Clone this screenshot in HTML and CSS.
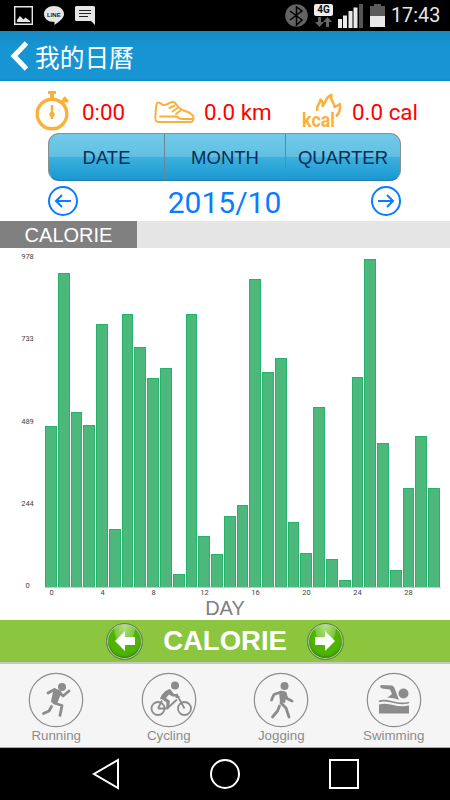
FILE: index.html
```html
<!DOCTYPE html>
<html lang="zh-Hant">
<head>
    <meta charset="UTF-8">
    <meta name="viewport" content="width=device-width, initial-scale=1.0">
    <title>我的日曆</title>
    <link rel="stylesheet" href="styles.css">
</head>
<body>
    <!-- Status bar -->
    <div class="status-bar">
        <div class="status-left">
            <svg width="19" height="19" viewBox="0 0 19 19"><path d="M.7.7h17.6v17.6H.7z" fill="none" stroke="#e6e6e6" stroke-width="1.4"/><path d="M3 16v-2l3-4 3.500 3.500 2-2L16 15v1z" fill="#e6e6e6"/></svg>
            <svg width="20" height="19" viewBox="0 0 20 19"><path d="M10 0c5.500 0 10 3.500 10 8 0 4-4 7-9.500 11v-3C4 16 0 12.500 0 8 0 3.500 4.500 0 10 0z" fill="#e6e6e6"/><text x="3" y="10.500" class="line-text">LINE</text></svg>
            <svg width="20" height="19" viewBox="0 0 20 19"><path d="M0 1.500Q0 0 1.500 0h17Q20 0 20 1.500V19l-4-4H1.500Q0 15 0 13.500z" fill="#e6e6e6"/><path d="M4 4.500h12M4 7.500h12M4 10.500h9" stroke="#222" stroke-width="1"/></svg>
        </div>
        <div class="status-right">
            <svg width="23" height="23" viewBox="0 0 23 23"><circle cx="11.500" cy="11.500" r="11.300" fill="#636363"/><path d="M5 7l12 9-5.500 5V3l5.500 4-12 9" fill="none" stroke="#000" stroke-width="1.500"/></svg>
            <div class="network">
                <span class="network-type">4G</span>
                <svg width="17" height="10" viewBox="0 0 17 10"><path d="M3 0h3v5h3L4.500 10 0 5h3zM11 10h3V5h3l-4.500-5L8 5h3z" fill="#666"/></svg>
            </div>
            <svg class="signal" width="25" height="24" viewBox="0 0 25 24"><path d="M0 15h4v9H0zM5 11.500h4V24H5zM10.500 7h4v17h-4zM15.500 3.500h4V24h-4z" fill="#e9e9e9"/><path d="M21 0h4v24h-4z" fill="#555"/></svg>
            <svg class="battery" width="15" height="23" viewBox="0 0 15 23"><path d="M4 0h7v2h4v11H0V2h4z" fill="#5b5b5b"/><path d="M0 12h15v11H0z" fill="#e9e9e9"/></svg>
            <span class="clock">17:43</span>
        </div>
    </div>

    <header class="header">
        <svg width="18" height="30" viewBox="0 0 18 30"><path d="M16.500 2L4 15l12.500 13" fill="none" stroke="#fff" stroke-width="5"/></svg>
        <h1>我的日曆</h1>
    </header>

    <!-- Totals -->
    <div class="totals">
        <div class="total time">
            <svg width="34" height="42" viewBox="0 1 34 42" fill="none" stroke="#fbb03b"><circle cx="17" cy="24" r="14.800" stroke-width="3.400"/><path d="M17 3v6M27.500 12l4-4" stroke-width="4"/><path d="M13 2.500h8M28.500 7.500l4.500 4.500" stroke-width="3"/><path d="M17 15v14" stroke-width="2.500"/><circle cx="17" cy="24.500" r="2.300" fill="#fbb03b" stroke-width="1"/></svg>
            <span>0:00</span>
        </div>
        <div class="total distance">
            <svg width="41" height="24" viewBox="0 0 41 24" fill="none" stroke="#fbb03b" stroke-width="2" stroke-linecap="round" stroke-linejoin="round"><path d="M3 3c3-2 4 2 7 2C15 5 16 1 19.500 2c3 1 3.500 4.500 6.500 6.500 4 3.300 12 3 13.500 8.500.5 3.500-1 5-4 5H5c-4 0-4-3-3.500-7C2 11 1.500 6 3 3z"/><path d="M6 16.500h16c3 0 2.500 2.500 6 2.500h11M15.500 8l5-2.500M18.500 11.500l5-3.500M22 14l4.500-3.500"/></svg>
            <span>0.0 km</span>
        </div>
        <div class="total calories">
            <svg width="41" height="42" viewBox="0 -2 41 42"><path d="M15.500 18C13.500 13 18.500 10.500 18.500 6.500c2.500 1.500 2.500 4.500 2 6.500 4-3 2-9 9-11-2 6 3.500 7.500 3 12 2-.5 3.500-2 5.500-3 .5 5-.5 9.500-4 12.500" fill="none" stroke="#fbb03b" stroke-width="2.500" stroke-linejoin="round"/><text x="0" y="33.500" class="kcal-text" textLength="33" lengthAdjust="spacingAndGlyphs">kcal</text></svg>
            <span>0.0 cal</span>
        </div>
    </div>

    <div class="tabs">
        <button class="tab">DATE</button>
        <button class="tab">MONTH</button>
        <button class="tab">QUARTER</button>
    </div>

    <div class="date-nav">
        <svg width="30" height="30" viewBox="0 0 30 30" fill="none" stroke="#0a7cff" stroke-width="2"><circle cx="15" cy="15" r="14"/><path d="M23 15H9M14 9l-6 6 6 6"/></svg>
        <span>2015/10</span>
        <svg width="30" height="30" viewBox="0 0 30 30" fill="none" stroke="#0a7cff" stroke-width="2"><circle cx="15" cy="15" r="14"/><path d="M7 15h14M16 9l6 6-6 6"/></svg>
    </div>

    <div class="chart-title"><span>CALORIE</span></div>

    <!-- Chart -->
    <div class="chart">
        <div class="y-axis">
            <span>978</span>
            <span>733</span>
            <span>489</span>
            <span>244</span>
            <span>0</span>
        </div>
        <div class="bars" id="bars"></div>
    </div>
    <div class="x-axis">
        <span>0</span><span>4</span><span>8</span><span>12</span><span>16</span><span>20</span><span>24</span><span>28</span>
    </div>
    <div class="x-title">DAY</div>

    <div class="metric-bar">
        <div class="round-button"><svg width="22" height="20" viewBox="0 0 22 20"><path d="M11 0v6h10v8H11v6L1 10z" fill="#fff"/></svg></div>
        <span>CALORIE</span>
        <div class="round-button"><svg width="22" height="20" viewBox="0 0 22 20"><path d="M11 0v6H1v8h10v6l10-10z" fill="#fff"/></svg></div>
    </div>

    <!-- Sports -->
    <nav class="sports">
        <div class="sport">
            <svg width="56" height="56" viewBox="0 0 56 56"><circle class="ring" cx="28" cy="28" r="26.700"/><circle cx="34" cy="15" r="4" fill="#8c8c8c"/><path d="M26.500 17.500l6 2.500-4 10.500-4.500-1z" fill="#8c8c8c" stroke="#8c8c8c" stroke-width="2" stroke-linejoin="round"/><path class="limb" d="M20 21l6.500-3.500 5 3 3.500 3.500 6-5M26 31l8 2.500-2 10M23.500 34.500l-2.500 4.500-5.500 2.500"/></svg>
            <span>Running</span>
        </div>
        <div class="sport">
            <svg width="56" height="56" viewBox="0 0 56 56"><circle class="ring" cx="28" cy="28" r="26.700"/><circle cx="34" cy="13.500" r="4" fill="#8c8c8c"/><g fill="none" stroke="#8c8c8c" stroke-width="1.800"><circle cx="17" cy="36.500" r="6.500"/><circle cx="43.500" cy="36.500" r="6.500"/><path d="M17 36.500l4-8M17 36.500h9l10-9M35.500 22l8 14.500M34.500 25h4"/></g><path d="M19 27c1-4 5-9 10-10l4 5h4v2.500h-5.500L28 22.500l-3 3.500 4 3-1.500 8H25l.5-6.500-4-3z" fill="#8c8c8c"/></svg>
            <span>Cycling</span>
        </div>
        <div class="sport">
            <svg width="56" height="56" viewBox="0 0 56 56"><circle class="ring" cx="28" cy="28" r="26.700"/><circle cx="31.500" cy="14" r="4" fill="#8c8c8c"/><path d="M26 20l5-1 3 2-2 10-5-1z" fill="#8c8c8c"/><path class="limb" d="M18.500 28l2.500-5.500 7-2.500 4 1.500 2 5 5 2.500M29.500 22l-1.500 9 5 5 3 9M26.500 34l-2 5-5 6"/></svg>
            <span>Jogging</span>
        </div>
        <div class="sport">
            <svg width="56" height="56" viewBox="0 0 56 56"><circle class="ring" cx="28" cy="28" r="26.700"/><circle cx="37.500" cy="21.500" r="5" fill="#8c8c8c"/><path d="M15 13l11 .5c1.500.5 2 1.500 2.500 2.500L33 28c-5-2-8-2.500-12-2l5-4-2-4.500-8-1c-2-1-2.500-2.500-1-3.500z" fill="#8c8c8c"/><path d="M13 29.500c9-4 16 5 30 1" fill="none" stroke="#8c8c8c" stroke-width="1.600"/><path d="M13 32.500c11-3 17 4 30 1v8H13z" fill="#8c8c8c"/></svg>
            <span>Swimming</span>
        </div>
    </nav>

    <div class="system-nav">
        <svg width="30" height="32" viewBox="0 0 30 32"><path d="M27 2v28L3 16z" fill="none" stroke="#fff" stroke-width="2"/></svg>
        <svg width="32" height="32" viewBox="0 0 32 32"><circle cx="16" cy="16" r="14" fill="none" stroke="#fff" stroke-width="2"/></svg>
        <svg width="30" height="32" viewBox="0 0 30 32"><path d="M1 2h28v28H1z" fill="none" stroke="#fff" stroke-width="2"/></svg>
    </div>

    <script>
        // Calories burned for each day
        const calories = [
            479, 936, 523, 482, 784, 174, 814, 716, 623, 653, 40,
            814, 152, 97, 213, 246, 917, 640, 683, 195, 100,
            537, 85, 22, 626, 978, 428, 51, 295, 449, 294
        ];
        const max = Math.max(...calories);
        const bars = document.getElementById('bars');

        calories.forEach(value => {
            const bar = document.createElement('div');
            bar.className = 'bar';
            bar.style.height = `${value / max * 100}%`;
            bars.appendChild(bar);
        });
    </script>
</body>
</html>
```

FILE: styles.css
```css
* {
    box-sizing: border-box;
}

body {
    width: 450px;
    height: 800px;
    margin: 0;
    background-color: #fff;
    font-family: "Liberation Sans", Arial, sans-serif;
    display: flex;
    flex-direction: column;
    overflow: hidden;
}

body > * {
    flex-shrink: 0;
}

svg {
    display: block;
    flex-shrink: 0;
}

.status-bar {
    height: 31px;
    padding: 0 9px 0 14px;
    background-color: #000;
    display: flex;
    justify-content: space-between;
    align-items: center;
}

.status-left,
.status-right {
    display: flex;
    align-items: center;
}

.status-left {
    gap: 11px;
}

.line-text {
    font: bold 6px "Liberation Sans", sans-serif;
    fill: #222;
}

.network {
    width: 19px;
    margin-left: 6px;
    display: flex;
    flex-direction: column;
    align-items: center;
    gap: 1px;
}

.network-type {
    width: 19px;
    height: 12px;
    border-radius: 2px;
    background-color: #eee;
    color: #111;
    font: bold 10px/12px Roboto, sans-serif;
    text-align: center;
}

.signal {
    margin-left: 5px;
}

.battery {
    margin-left: 7px;
}

.clock {
    width: 50px;
    margin-left: 6px;
    color: #e6e6e6;
    font: 19.8px/32px Roboto, sans-serif;
    white-space: nowrap;
}

.header {
    height: 50px;
    padding: 0 10px;
    background: linear-gradient(#168ac5, #1795d3 35%, #1795d3 96%, #088ac9);
    display: flex;
    align-items: center;
    gap: 7px;
}

.header h1 {
    margin: 0;
    color: #fff;
    font: 400 24.7px/48px "Noto Sans CJK TC", sans-serif;
}

.totals {
    height: 52px;
    padding: 10px 0 0 35px;
    display: grid;
    grid-template-columns: 119px 148px 1fr;
}

.total {
    height: 42px;
    display: flex;
    align-items: center;
    color: #f00;
    font: 22.4px/42px Roboto, sans-serif;
    white-space: nowrap;
}

.time {
    gap: 13px;
}

.distance {
    gap: 9px;
}

.calories {
    gap: 9px;
}

.kcal-text {
    font: bold 20px Roboto, sans-serif;
    fill: #fbb03b;
}

.tabs {
    width: 353px;
    height: 48px;
    margin-left: 48px;
    border: 1px solid #878f91;
    border-bottom-color: #267da5;
    border-radius: 11px;
    background: linear-gradient(#71cbe9, #60bfe1 49%, #3db1dd 50%, #1998d2);
    display: grid;
    grid-template-columns: 116px 121px 1fr;
    overflow: hidden;
}

.tab {
    padding: 2px 0 0;
    border: none;
    border-right: 1px solid #6b8792;
    background: none;
    color: #062d59;
    font: 18.5px "Liberation Sans", Arial, sans-serif;
}

.tab:last-child {
    border-right: none;
}

.date-nav {
    height: 40px;
    padding: 0 49px 0 48px;
    display: flex;
    justify-content: space-between;
    align-items: center;
    color: #0a7cff;
    font: 30px/40px Roboto, sans-serif;
}

.date-nav span {
    padding-top: 3px;
}

.chart-title {
    height: 27px;
    background-color: #e5e5e5;
}

.chart-title span {
    display: block;
    width: 137px;
    height: 27px;
    background-color: #808080;
    color: #fff;
    font-size: 20px;
    line-height: 29px;
    text-align: center;
}

.chart {
    height: 340px;
    padding: 3px 9px 0 14px;
    display: flex;
}

.y-axis {
    height: 340px;
    width: 27px;
    padding-top: 1px;
    margin-right: 4px;
    display: flex;
    flex-direction: column;
    justify-content: space-between;
    align-items: center;
    color: #444;
    font: 7.5px/10px Roboto, sans-serif;
}

.bars {
    width: 396px;
    height: 329px;
    margin-top: 8px;
    border-bottom: 1px solid #a7dabd;
    display: grid;
    grid-template-columns: repeat(31, 1fr);
    align-items: end;
}

.bar {
    margin-right: 1px;
    border: 1px solid #27b26b;
    border-bottom: none;
    background-color: #4db87b;
}

.x-axis {
    width: 408px;
    height: 9px;
    margin-left: 26px;
    display: grid;
    grid-template-columns: repeat(8, 1fr);
    color: #444;
    font: 7.5px/9px Roboto, sans-serif;
    text-align: center;
}

.x-title {
    height: 23px;
    color: #808080;
    font-size: 20px;
    line-height: 22px;
    text-align: center;
}

.metric-bar {
    height: 42px;
    background-color: #8cc63f;
    display: flex;
    justify-content: center;
    align-items: center;
    gap: 20px;
    color: #fff;
    font-size: 27.5px;
    font-weight: bold;
}

.round-button {
    width: 37px;
    height: 37px;
    border: 1px solid #687b59;
    border-radius: 50%;
    background: radial-gradient(ellipse at 50% 0, #b9e387, #7bc83c 42%, #50b500 45%, #4daf00);
    box-shadow: inset 0 0 0 1px #b7cdab, inset 0 -2px 3px #277900;
    display: flex;
    justify-content: center;
    align-items: center;
}

.sports {
    height: 86px;
    padding: 8px 0 0;
    border-top: 2px solid #c7c7c7;
    border-bottom: 1px solid #aaa;
    background-color: #f5f5f5;
    display: grid;
    grid-template-columns: repeat(4, 112.5px);
}

.sport {
    display: flex;
    flex-direction: column;
    align-items: center;
    color: #8c8c8c;
    font-size: 13.3px;
    line-height: 16px;
}

.ring {
    fill: none;
    stroke: #8c8c8c;
    stroke-width: 1.2;
}

.limb {
    fill: none;
    stroke: #8c8c8c;
    stroke-width: 2.8;
    stroke-linecap: round;
    stroke-linejoin: round;
}

.system-nav {
    height: 52px;
    padding: 0 91px;
    background-color: #000;
    display: flex;
    justify-content: space-between;
    align-items: center;
}
```
